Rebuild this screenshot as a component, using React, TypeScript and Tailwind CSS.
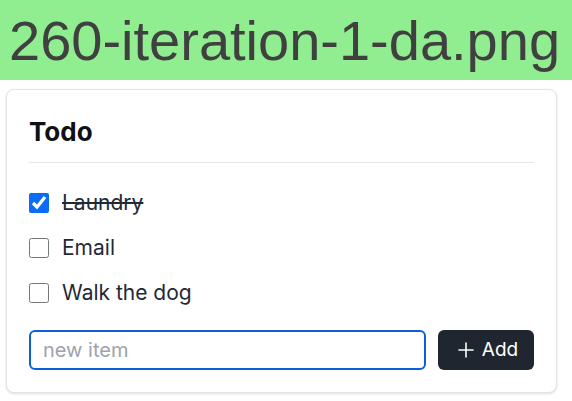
import { useState } from 'react';
import { Plus } from 'lucide-react';

interface Todo {
  id: number;
  text: string;
  done: boolean;
}

export default function App() {
  const [todos, setTodos] = useState<Todo[]>([
    { id: 1, text: 'Laundry', done: true },
    { id: 2, text: 'Email', done: false },
    { id: 3, text: 'Walk the dog', done: false },
  ]);
  const [draft, setDraft] = useState('');

  const toggle = (id: number) => {
    setTodos(todos.map(t => (t.id === id ? { ...t, done: !t.done } : t)));
  };

  const addTodo = () => {
    if (!draft.trim()) return;
    setTodos([...todos, { id: Date.now(), text: draft.trim(), done: false }]);
    setDraft('');
  };

  return (
    <div className="min-h-[401px] w-[572px] bg-white">
      <div className="flex h-[80px] items-center bg-[#90ee90] pl-[9px] pt-[2px] font-['Liberation_Sans',Arial,sans-serif] text-[56px] leading-none text-[#404040]">
        260-iteration-1-da.png
      </div>

      <div className="mx-[6px] mt-[9px] w-[551px] rounded-lg border border-[#e3e4e8] bg-white p-[22px] font-['Inter','Noto_Sans',sans-serif] shadow-sm">
        <h2 className="border-b border-[#e5e7eb] pt-[2px] pb-[12px] text-[26px] leading-[36px] font-bold text-[#0f1117]">
          Todo
        </h2>

        <ul className="mt-[17px]">
          {todos.map(todo => (
            <li key={todo.id} className="flex h-[45px] items-center gap-[13px]">
              <input
                type="checkbox"
                checked={todo.done}
                onChange={() => toggle(todo.id)}
                className="m-0 h-5 w-5 accent-[#0b6cf7]"
              />
              <span
                className={
                  'text-[21px] text-[#1f2937] ' + (todo.done ? 'line-through' : '')
                }
              >
                {todo.text}
              </span>
            </li>
          ))}
        </ul>

        <div className="mt-[15px] flex gap-3">
          <input
            autoFocus
            value={draft}
            onChange={e => setDraft(e.target.value)}
            placeholder="new item"
            className="h-10 flex-1 rounded-md border-2 border-[#0d5fd6] px-3 text-[20px] text-[#1f2937] outline-none placeholder:text-[#9ca3af]"
          />
          <button
            onClick={addTodo}
            className="flex h-10 w-[96px] items-center justify-center gap-1 rounded-md bg-[#1f2630] text-[19px] text-white"
          >
            <Plus className="h-6 w-6" strokeWidth={1.6} />
            Add
          </button>
        </div>
      </div>
    </div>
  );
}
